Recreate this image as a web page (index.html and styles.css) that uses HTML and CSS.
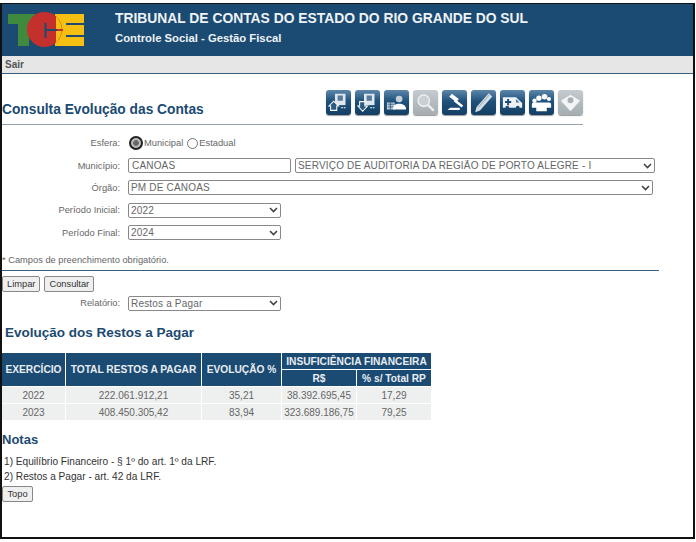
FILE: index.html
```html
<!DOCTYPE html>
<html lang="pt">
<head>
    <meta charset="UTF-8">
    <meta name="viewport" content="width=device-width, initial-scale=1.0">
    <title>Consulta Evolução das Contas</title>
    <link rel="stylesheet" href="styles.css">
</head>
<body>
<div class="frame">
    <div class="header">
        <svg class="logo" width="84" height="40" viewBox="0 0 84 40">
            <rect x="2" y="2" width="27" height="10" fill="#3f8a3c"/>
            <rect x="12" y="2" width="11" height="32" fill="#3f8a3c"/>
            <rect x="49" y="2" width="29" height="32" fill="#f5bf12"/>
            <rect x="60" y="11" width="18" height="2" fill="#1b4a72"/>
            <rect x="60" y="23" width="18" height="2" fill="#1b4a72"/>
            <circle cx="38.500" cy="17.500" r="17.500" fill="#c4302c"/>
            <path d="M50 4.500 A17.500 17.500 0 0 1 50 30.500 Z" fill="#f5bf12"/>
            <rect x="38.500" y="11" width="2" height="15" fill="#1b4a72"/>
            <rect x="39" y="17" width="12" height="2" fill="#1b4a72"/>
            <rect x="51" y="17" width="6" height="2" fill="#c4302c"/>
        </svg>
        <div class="header-text">
            <div class="header-title">TRIBUNAL DE CONTAS DO ESTADO DO RIO GRANDE DO SUL</div>
            <div class="header-sub">Controle Social - Gestão Fiscal</div>
        </div>
    </div>
    <div class="menu">Sair</div>

    <div class="title-row">
        <h1>Consulta Evolução das Contas</h1>
        <div class="icons">
            <span class="tile"><svg viewBox="0 0 24 24"><rect x="8" y="2" width="12" height="13" fill="#dfe6ec"/><rect x="11" y="4" width="6" height="6" fill="#567a99"/><path d="M1 16 6.500 10.500 12 16h-2v5H3v-5z" fill="#2a5c86" stroke="#fff" stroke-width="1.200"/><path d="M15 18h5" stroke="#fff" stroke-width="1.400" stroke-dasharray="2 1"/></svg></span>
            <span class="tile"><svg viewBox="0 0 24 24"><rect x="8" y="2" width="12" height="13" fill="#dfe6ec"/><rect x="11" y="4" width="6" height="6" fill="#567a99"/><path d="M3 11h6v5h3l-5.500 6L1 16h2z" fill="#2a5c86" stroke="#fff" stroke-width="1.200"/><path d="M15 18h5" stroke="#fff" stroke-width="1.400" stroke-dasharray="2 1"/></svg></span>
            <span class="tile"><svg viewBox="0 0 24 24"><rect x="1" y="12" width="9" height="8" fill="#b9c9d6"/><path d="M2 14h7M2 17h7M5 12v8" stroke="#1c4c75" stroke-width=".8"/><circle cx="15" cy="8" r="3.800" fill="#c5d2dc"/><path d="M8 20c0-5 3-6.500 7-6.500s8 1.500 8 6.500z" fill="#fff"/></svg></span>
            <span class="tile off"><svg viewBox="0 0 24 24"><circle cx="10" cy="10" r="6.500" fill="#c9d0d4" stroke="#eef1f3" stroke-width="1.600"/><path d="M15 15 21.500 21.500" stroke="#eef1f3" stroke-width="2.600"/></svg></span>
            <span class="tile"><svg viewBox="0 0 24 24"><path d="M9 2l8 6-3 3.500-8-6z" fill="#fff"/><path d="M12 9.500l9 7" stroke="#fff" stroke-width="2.800"/><path d="M4 20.500h14v-2.500H7z" fill="#fff"/></svg></span>
            <span class="tile"><svg viewBox="0 0 24 24"><path d="M4 17 18 1.500l4 3.500L8 21l-5.500 2z" fill="#d5dde4"/><path d="M5.500 18 19 3" stroke="#8fa3b3" stroke-width="1"/></svg></span>
            <span class="tile"><svg viewBox="0 0 24 24"><path d="M1 6h15l7 6.500V18H1z" fill="#eef2f5"/><path d="M7 8v7M3.500 11.500h7" stroke="#1c4c75" stroke-width="2.200"/><path d="M16 8l4 4h-4z" fill="#567a99"/><circle cx="6" cy="18" r="2.200" fill="#1c4c75"/><circle cx="18" cy="18" r="2.200" fill="#1c4c75"/></svg></span>
            <span class="tile"><svg viewBox="0 0 24 24"><circle cx="9" cy="7" r="3" fill="#fff"/><circle cx="15.500" cy="5.500" r="3.200" fill="#fff"/><circle cx="20.500" cy="8" r="2.400" fill="#fff"/><circle cx="4" cy="10" r="2.500" fill="#fff"/><path d="M1 14c0-1 1-2 3-2h15c2 0 4 0 4 2v4h-5v4H6v-4H1z" fill="#fff"/></svg></span>
            <span class="tile off"><svg viewBox="0 0 24 24"><path d="M1 10 12 3l11 7-11 12z" fill="#f2f4f5"/><circle cx="12" cy="9.500" r="3.400" fill="#a9b1b6"/></svg></span>
        </div>
    </div>

    <form class="form">
        <div class="row">
            <label class="label">Esfera:</label>
            <input class="radio-first" type="radio" name="esfera" checked><span class="radio-text">Municipal</span>
            <input class="radio-second" type="radio" name="esfera"><span class="radio-text">Estadual</span>
        </div>
        <div class="row">
            <label class="label">Município:</label>
            <input class="field-text" type="text" value="CANOAS">
            <select class="field-sra"><option>SERVIÇO DE AUDITORIA DA REGIÃO DE PORTO ALEGRE - I</option></select>
        </div>
        <div class="row">
            <label class="label">Órgão:</label>
            <select class="field-wide"><option>PM DE CANOAS</option></select>
        </div>
        <div class="row">
            <label class="label">Período Inicial:</label>
            <select class="field-short"><option>2022</option></select>
        </div>
        <div class="row">
            <label class="label">Período Final:</label>
            <select class="field-short"><option>2024</option></select>
        </div>
        <p class="required">* Campos de preenchimento obrigatório.</p>
        <div class="form-line"></div>
        <div class="buttons">
            <button type="button">Limpar</button>
            <button type="button">Consultar</button>
        </div>
        <div class="row">
            <label class="label">Relatório:</label>
            <select class="field-short"><option>Restos a Pagar</option></select>
        </div>
    </form>

    <h2>Evolução dos Restos a Pagar</h2>
    <table class="tabela">
        <thead>
            <tr>
                <th class="col-ex" rowspan="2">EXERCÍCIO</th>
                <th class="col-total" rowspan="2">TOTAL RESTOS A PAGAR</th>
                <th class="col-evo" rowspan="2">EVOLUÇÃO %</th>
                <th colspan="2">INSUFICIÊNCIA FINANCEIRA</th>
            </tr>
            <tr>
                <th class="col-rs">R$</th>
                <th class="col-pct">% s/ Total RP</th>
            </tr>
        </thead>
        <tbody>
            <tr><td>2022</td><td>222.061.912,21</td><td>35,21</td><td>38.392.695,45</td><td>17,29</td></tr>
            <tr><td>2023</td><td>408.450.305,42</td><td>83,94</td><td>323.689.186,75</td><td>79,25</td></tr>
        </tbody>
    </table>

    <h3>Notas</h3>
    <p class="nota">1) Equilíbrio Financeiro - § 1º do art. 1º da LRF.</p>
    <p class="nota">2) Restos a Pagar - art. 42 da LRF.</p>
    <button class="btn-topo" type="button">Topo</button>
</div>
</body>
</html>
```

FILE: styles.css
```css
html, body {
    margin: 0;
    background: #fff;
}
body {
    font-family: "Liberation Sans", Arial, sans-serif;
    font-size: 9.300px;
    color: #444;
    padding-top: 3px;
}
.frame {
    width: 691px;
    height: 533px;
    border: 2px solid #111;
    border-top-width: 1px;
    overflow: hidden;
}
.header {
    height: 52px;
    background: #1b4a72;
    display: flex;
}
.logo {
    margin: 8px 0 0 4px;
}
.header-text {
    margin-left: 25px;
    color: #eef2f5;
    font-weight: bold;
}
.header-title {
    font-size: 13.850px;
    margin-top: 6px;
    line-height: 16px;
}
.header-sub {
    font-size: 11.300px;
    margin-top: 5px;
    line-height: 14px;
}
.menu {
    height: 17px;
    line-height: 17px;
    background: #e6e6e6;
    border-bottom: 1px solid #39607f;
    padding-left: 3px;
    font-size: 10px;
    font-weight: bold;
    color: #555;
}
.title-row {
    width: 581px;
    height: 50px;
    border-bottom: 1px solid #93a4b0;
    display: flex;
    justify-content: space-between;
    align-items: flex-start;
}
h1 {
    margin: 27px 0 0 0;
    font-size: 13.750px;
    line-height: 17px;
    color: #1b4a72;
}
.icons {
    display: flex;
    gap: 4px;
    margin-top: 16px;
}
.tile {
    width: 25px;
    height: 25px;
    box-sizing: border-box;
    padding: 2px;
    border-radius: 3px;
    background: linear-gradient(#5d87aa 0, #1f517b 45%, #143f63 100%);
    box-shadow: 0 1px 1px #999;
}
.tile.off {
    background: linear-gradient(#c5cbcf, #a5adb2);
}
.tile svg {
    display: block;
    width: 21px;
    height: 21px;
}
.form {
    width: 657px;
    padding-top: 7px;
}
.row {
    display: flex;
    align-items: center;
    height: 22.400px;
}
.label {
    width: 118px;
    margin-right: 8px;
    text-align: right;
    color: #666;
}
.radio-first {
    appearance: none;
    box-sizing: border-box;
    width: 14px;
    height: 14px;
    margin: 0 1px 0 1px;
    border: 2px solid #222;
    border-radius: 50%;
    background: radial-gradient(circle, #666 0, #666 35%, #bbb 45%);
}
.radio-second {
    width: 11px;
    height: 11px;
    margin: 0 1px 0 4px;
}
.radio-text {
    color: #666;
}
input[type="text"], select {
    box-sizing: border-box;
    height: 15px;
    font-family: "Liberation Sans", Arial, sans-serif;
    font-size: 10px;
    letter-spacing: 0.180px;
    color: #666;
    background-color: #fff;
    border: 1px solid #888;
    border-radius: 2px;
}
select {
    appearance: none;
    padding: 0 0 0 2px;
    background-image: url("data:image/svg+xml,%3Csvg xmlns='http://www.w3.org/2000/svg' width='9' height='6'%3E%3Cpath d='M1 1l3.500 3.500L8 1' fill='none' stroke='%23444' stroke-width='1.600'/%3E%3C/svg%3E");
    background-repeat: no-repeat;
    background-position: right 2px center;
}
.field-text {
    width: 163px;
    padding: 0 0 0 3px;
    color: #333;
    font-size: 9.300px;
    letter-spacing: 0;
}
.field-sra {
    width: 360px;
    margin-left: 4px;
}
.field-wide {
    width: 525px;
}
.field-short {
    width: 153px;
}
.required {
    margin: 10px 0 0 0;
    line-height: 12px;
    height: 16px;
    color: #666;
}
.form-line {
    height: 1px;
    background: #39607f;
}
.buttons {
    display: flex;
    gap: 4px;
    margin-top: 5px;
}
button {
    height: 16px;
    padding: 0 4px;
    font-family: "Liberation Sans", Arial, sans-serif;
    font-size: 9.300px;
    color: #333;
    background: #efefef;
    border: 1px solid #888;
    border-radius: 2px;
}
h2 {
    margin: 10px 0 0 3px;
    font-size: 13.500px;
    line-height: 18px;
    color: #1b4a72;
}
.tabela {
    margin-top: 11px;
    border-collapse: collapse;
    table-layout: fixed;
    width: 430px;
    text-align: center;
}
.tabela th {
    background: #1b4a72;
    color: #e8edf2;
    font-size: 10.200px;
    height: 16px;
    padding: 0;
    border: 1px solid #fff;
    border-width: 0 1px 1px 0;
}
.tabela td {
    background: #eef0f0;
    color: #666;
    font-size: 10px;
    height: 16px;
    padding: 0;
    border: 1px solid #fff;
    border-width: 0 1px 1px 0;
}
.col-ex { width: 63px; }
.col-total { width: 135px; }
.col-evo { width: 79px; }
.col-rs { width: 80px; }
.col-pct { width: 73px; }
h3 {
    margin: 10px 0 0 0;
    font-size: 13px;
    line-height: 17px;
    color: #1b4a72;
}
.nota {
    margin: 0;
    padding-left: 2px;
    font-size: 10.150px;
    line-height: 15px;
    color: #333;
}
h3 + .nota {
    margin-top: 6px;
}
.btn-topo {
    display: block;
    margin-top: 2px;
    width: 31px;
    padding: 0;
}
```
